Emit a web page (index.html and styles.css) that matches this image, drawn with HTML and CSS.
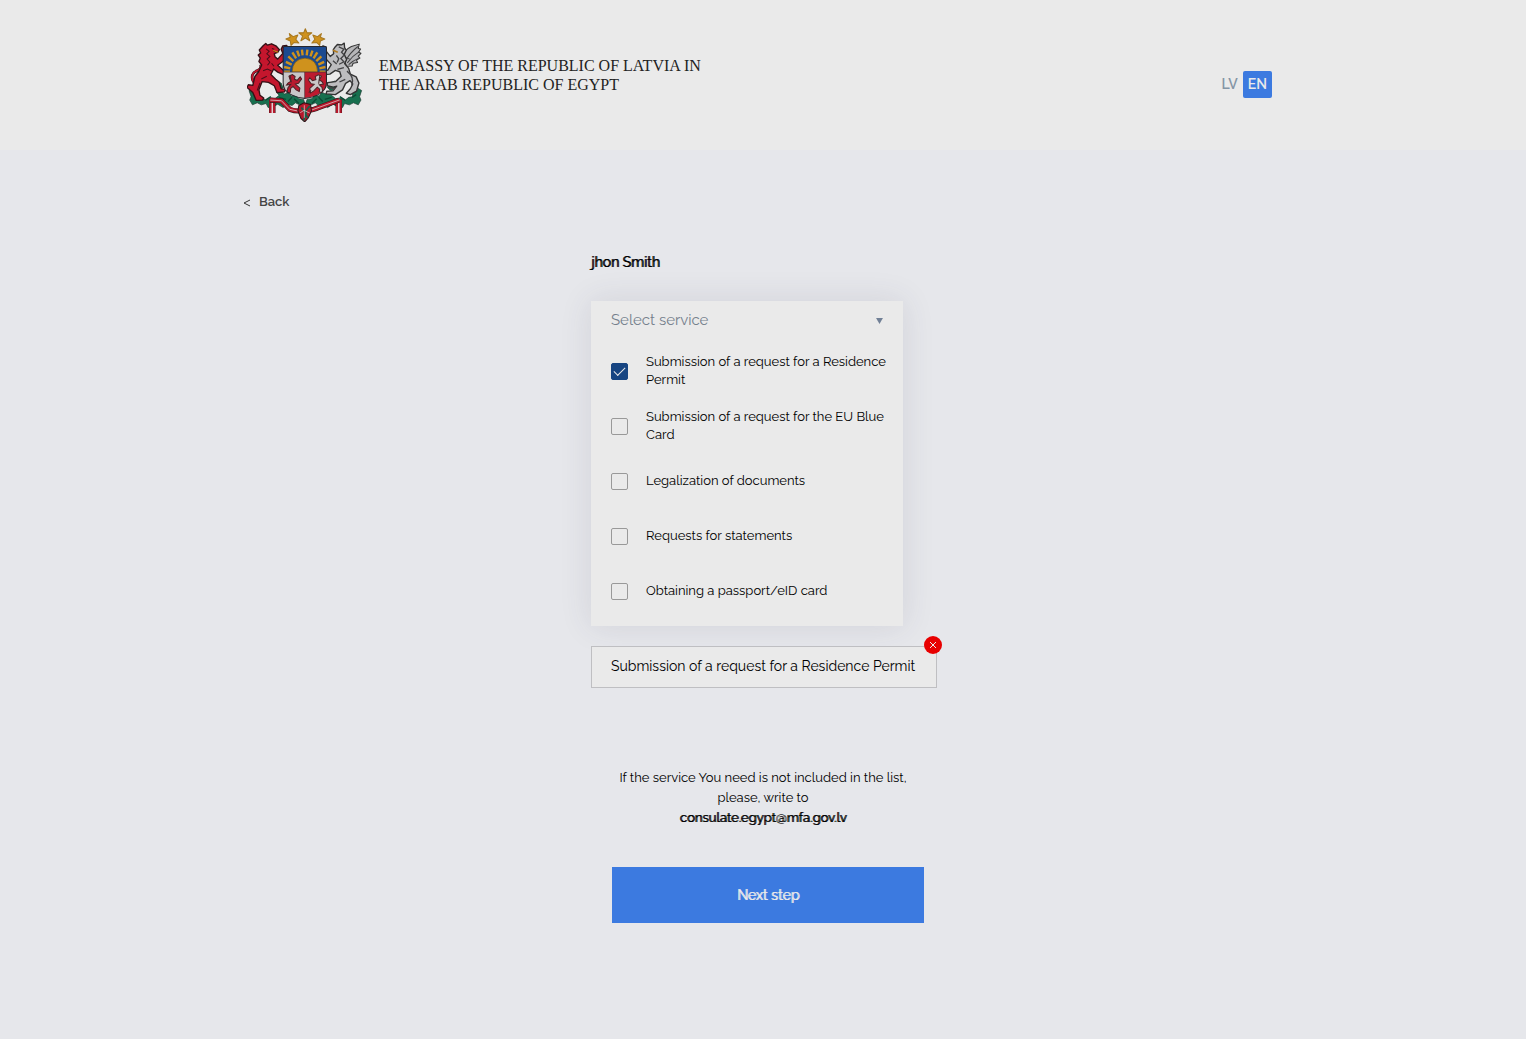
FILE: index.html
```html
<!DOCTYPE html>
<html lang="en">
<head>
<meta charset="utf-8">
<meta name="viewport" content="width=device-width, initial-scale=1">
<title>Select service</title>
<link rel="stylesheet" href="styles.css">
</head>
<body>
<header class="site-header">
  <div class="container header-row">
    <a class="brand" href="#">
      <svg class="arms" viewBox="22 25 340 275" role="img" aria-label="Coat of arms of Latvia">
        <!-- oak branches -->
        <g fill="#17704f" stroke="#1c3a30" stroke-width="2">
          <path d="M28 208l10-6 6 10 12 2-2 12 12 2 10 8 14-6 14 2 12-10-8-10 14-2 10 8 14-4 6 10 14-2 8 10 14 2 4 14-16 2-12-6-10 8-14-4-12 10-16-10-14 8-14 2-6-12-14 4-12-6-14 6-8-14 4-10z"/>
          <path d="M358 208l-10-6-6 10-12 2 2 12-12 2-10 8-14-6-14 2-12-10 8-10-14-2-10 8-14-4-6 10-14-2-8 10-14 2-4 14 16 2 12-6 10 8 14-4 12 10 16-10 14 8 14 2 6-12 14 4 12-6 14 6 8-14-4-10z"/>
          <path d="M106 180l16 6 6 14-12 10-12-14zM280 180l-16 6-6 14 12 10 12-14z"/>
        </g>
        <path d="M46 220l12 8M76 236l16-10M116 228l20 6M142 240l12-12M160 232l14 14M342 220l-12 8M310 236l-16-10M270 228l-20 6M244 240l-12-12M226 232l-14 14" fill="none" stroke="#0b4a35" stroke-width="4"/>
        <!-- ribbon -->
        <g fill="none" stroke-linecap="butt">
          <path d="M96 274V234M291 274V234" stroke="#2a1518" stroke-width="19"/>
          <path d="M96 274V234M291 274V234" stroke="#b4182b" stroke-width="17"/>
          <path d="M96 274V234M291 274V234" stroke="#e6e2e2" stroke-width="4"/>
          <path d="M90 236l33 2 24 25q22 8 44 3 24 1 43-9l58-21" stroke="#2a1518" stroke-width="15"/>
          <path d="M90 236l33 2 24 25q22 8 44 3 24 1 43-9l58-21" stroke="#b4182b" stroke-width="12"/>
          <path d="M90 236l33 2 24 25q22 8 44 3 24 1 43-9l58-21" stroke="#e6e2e2" stroke-width="2"/>
        </g>
        <path d="M174 252l15-8 19 5 3 18-9 21-11 12-11-10-9-23z" fill="#b4182b" stroke="#2a1518" stroke-width="3"/>
        <path d="M181 258l14 15-7 23M206 253l-15 18 9 18" fill="none" stroke="#17604a" stroke-width="5"/>
        <path d="M190 251v37M178 273l11-7 17 8" fill="none" stroke="#ded8d8" stroke-width="2"/>
        <!-- red lion -->
        <path d="M55 194q-22-12-17-32 3-9 16-13 11-4 8-17" fill="none" stroke="#351016" stroke-width="8"/>
        <path d="M55 194q-22-12-17-32 3-9 16-13 11-4 8-17" fill="none" stroke="#c4162d" stroke-width="5"/>
        <path d="M70 76l7-6 5 5 12-4 14 7 9 10-5 8-10 4 2 9 8 7 15-17-5-12 5-10 11-1 6 9-7 15-9 22-16 12 17 15 10 1 4 10-11 3-20-9-12-9-8 16 14 14 10 8 6 20 13 1-3 8-22 2-8-20-17-10-19-2-9 24 3 16 11 8-3 6-19 1-10-23-17-15 4-8 13 2 6-26 11-14 9-20-8-10 4-10-6-9 7-6-4-9z" fill="#c4162d" stroke="#351016" stroke-width="4" stroke-linejoin="round"/>
        <path d="M78 86l9 7-7 7 9 8-8 8 8 9-7 9M95 85l7 2M100 93l9 2M69 150l13-5 12 6M64 174l16-8M94 128l7 9M60 186l-8 22" fill="none" stroke="#4b0d18" stroke-width="3"/>
        <path d="M99 91l14 5" stroke="#c98a14" stroke-width="3"/>
        <!-- silver griffin -->
        <path d="M303 110q2-20 25-31l23-7-3 13 7 1-6 10 7 3-8 8 5 6-10 6 3 7-13 2-3 8-16 1z" fill="#b6b6b8" stroke="#333" stroke-width="3" stroke-linejoin="round"/>
        <path d="M311 121q13-24 36-42M316 127q14-20 35-33M320 132q13-12 30-19M304 108l19 8" fill="none" stroke="#424244" stroke-width="3"/>
        <path d="M279 82l8-9 13 1 7-5 1 13 5 8-6 12 7 15-6 12 12 14 5 17 17 8 8 18-7 24-18 10-12-4 12-13 7-14-8-10-13 8-9 19-21 14-27-2 2-8 18-1 11-14-10 3-18-4 1-9 23-3 17-16-4-13-13-4-16 11-17 1-3-9 14-4 10-16-14-15-11-18-6-15 7-7 8 4 2 13 11 14 10-8-1-12z" fill="#bdbdbf" stroke="#333" stroke-width="4" stroke-linejoin="round"/>
        <path d="M291 80l15 7-7 9 8 8-10 10 9 10-14 7M284 105l7 10-5 11M274 121l11 9M287 146l19-5M293 183l17-8M315 151q23 17 14 42M263 200l17 3" fill="none" stroke="#434345" stroke-width="4"/>
        <path d="M274 90l14 6" stroke="#b47d20" stroke-width="5"/>
        <!-- shield -->
        <path d="M128 79h127v75H128z" fill="#1b4a90"/>
        <g fill="none" stroke="#cf921d" stroke-width="7">
          <path d="M148 153h-17M149 143l-18-4M153 132l-17-8M158 122l-15-14M166 114l-11-18M175 108l-6-17M185 105l-2-17M235 153h17M234 143l18-4M231 132l17-8M225 122l15-14M217 114l11-18M208 108l6-17M197 105l2-17"/>
        </g>
        <path d="M154 154q1-38 38-41 36 3 37 41z" fill="#cf921d" stroke="#6c5520" stroke-width="2"/>
        <path d="M128 154h63v76q-40-4-58-25-5-8-5-20z" fill="#c9c6c8"/>
        <path d="M191 154h64v31q0 12-6 20-18 21-58 25z" fill="#bd1a2f"/>
        <path d="M145 166l10-5 8 6-2 8 8 3 9-10 4 6-9 13-9 2 13 12-2 10-9-5-9-10-7 6-1 11-10 1 3-14 8-10-12 2 4-6 8-5z" fill="#b91a2f" stroke="#4a2025" stroke-width="3"/>
        <path d="M240 166l-9-4-9 5 2 9-10 3-8-8-4 6 8 11 9 2-13 12 2 13 9-5 11-12 7 6-1 8 10 1-2-14-8-8 12-2-4-7-8-5z" fill="#cac7c8" stroke="#4b2227" stroke-width="3"/>
        <path d="M210 207l-7 7M148 162l4 22M235 166l-3 22" fill="none" stroke="#48282c" stroke-width="3"/>
        <path d="M133 79h118q4 0 4 5v101q0 12-6 20-18 23-58 26-40-4-58-26-5-8-5-20V84q0-5 5-5z" fill="none" stroke="#26262b" stroke-width="3"/>
        <path d="M128 154h127M191 154v76" stroke="#47333a" stroke-width="2"/>
        <!-- stars -->
        <g fill="#cf921d" stroke="#a8781f" stroke-width="3" stroke-linejoin="round">
          <path d="M193 27l5 12h14l-11 9 5 14-13-8-13 8 5-14-11-9h14z"/>
          <path d="M146 41l11 9 14-5-6 13 9 11-14-2-9 9-2-13-13-6 13-5z"/>
          <path d="M240 41l-11 9-14-5 6 13-9 11 14-2 9 9 2-13 13-6-13-5z"/>
        </g>
      </svg>
      <span class="brand-name">EMBASSY OF THE REPUBLIC OF LATVIA IN<br>THE ARAB REPUBLIC OF EGYPT</span>
    </a>
    <nav class="languages" aria-label="Language">
      <a class="language" href="#" lang="lv">LV</a>
      <a class="language active" href="#" aria-current="true">EN</a>
    </nav>
  </div>
</header>

<main class="container">
  <a class="back" href="#"><svg class="back-icon" viewBox="0 0 8 10" aria-hidden="true"><path d="M7 1L1 4L7 7"/></svg>Back</a>

  <form class="booking">
    <h1 class="person">jhon Smith</h1>

    <div class="dropdown">
      <button class="dropdown-toggle" type="button" aria-expanded="true" aria-controls="services">
        Select service
        <svg class="caret" viewBox="0 0 8 7" aria-hidden="true"><path d="M0 0h8L4 7z"/></svg>
      </button>
      <div class="services" id="services">
        <label class="service"><input class="tick" type="checkbox" checked><span>Submission of a request for a Residence Permit</span></label>
        <label class="service"><input class="tick" type="checkbox"><span>Submission of a request for the EU Blue Card</span></label>
        <label class="service"><input class="tick" type="checkbox"><span>Legalization of documents</span></label>
        <label class="service"><input class="tick" type="checkbox"><span>Requests for statements</span></label>
        <label class="service"><input class="tick" type="checkbox"><span>Obtaining a passport/eID card</span></label>
      </div>
    </div>

    <div class="chosen">
      <span>Submission of a request for a Residence Permit</span>
      <button class="remove" type="button" aria-label="Remove service"><svg viewBox="0 0 18 18" aria-hidden="true"><path d="M6 6l6 6M12 6l-6 6"/></svg></button>
    </div>

    <p class="note">If the service You need is not included in the list, please, write to<br><a class="email" href="mailto:consulate.egypt@mfa.gov.lv">consulate.egypt@mfa.gov.lv</a></p>

    <button class="next" type="submit">Next step</button>
  </form>
</main>
</body>
</html>
```
FILE: styles.css
```css
* {
  box-sizing: border-box;
}

body {
  margin: 0;
  min-height: 100vh;
  background: #e6e7eb;
  color: #000;
  font: 13px/18px Raleway, "Open Sans", sans-serif;
}

a {
  color: inherit;
  text-decoration: none;
}

button {
  border: 0;
  font: inherit;
  cursor: pointer;
}

.container {
  max-width: 1040px;
  margin: 0 auto;
}

.site-header {
  background: #eaeaea;
}

.header-row {
  display: flex;
  justify-content: space-between;
  align-items: center;
  min-height: 150px;
  padding: 0 11px 0 4px;
}

.brand {
  display: flex;
  align-items: center;
  gap: 16px;
}

.arms {
  width: 116px;
  height: 94px;
}

.brand-name {
  color: #222;
  font: 16px/19px "Liberation Serif", serif;
}

.languages {
  display: flex;
  padding-top: 19px;
}

.language {
  padding: 0 5px;
  border-radius: 2px;
  color: #8495a5;
  font-size: 14px;
  font-weight: 600;
  line-height: 27px;
}

.active {
  background: #3c7ae0;
  color: #eaeaea;
}

.back {
  display: inline-flex;
  align-items: center;
  gap: 8px;
  margin-top: 43px;
  color: #444;
  font-weight: 600;
}

.back-icon {
  width: 8px;
  height: 10px;
  margin-top: 3px;
  fill: none;
  stroke: #333;
}

.booking {
  width: 344px;
  max-width: 100%;
  margin: 38px auto 0;
  padding-bottom: 60px;
}

.person,
.email,
.next {
  font-weight: 400;
  text-shadow: 1px 0 currentColor;
}

.person {
  margin: 0 0 29px;
  font-size: 14px;
  line-height: 20px;
}

.dropdown {
  max-width: 312px;
  padding-bottom: 7px;
  background: #eaeaea;
  box-shadow: 0 0 30px rgba(60, 60, 90, 0.12);
}

.dropdown-toggle {
  display: flex;
  justify-content: space-between;
  align-items: center;
  width: 100%;
  margin-bottom: 5px;
  padding: 0 20px;
  background: none;
  color: #75808c;
  font-size: 15px;
  line-height: 38px;
}

.caret {
  width: 7px;
  height: 6px;
  margin-top: 2px;
  fill: #718096;
}

.service {
  display: flex;
  align-items: center;
  gap: 18px;
  min-height: 55px;
  padding: 0 12px 0 20px;
}

.tick {
  flex: none;
  appearance: none;
  width: 17px;
  height: 17px;
  margin: 0;
  border: 1px solid #999;
  border-radius: 2px;
}

.tick:checked {
  display: grid;
  place-items: center;
  border-color: #174582;
  background: #174582;
}

.tick:checked::before {
  content: "";
  width: 10px;
  height: 5px;
  margin-bottom: 3px;
  border: solid #eaeaea;
  border-width: 0 0 1px 1px;
  rotate: -45deg;
}

.chosen {
  position: relative;
  width: max-content;
  margin-top: 20px;
  padding: 0 21px 2px 19px;
  border: 1px solid #bfbfc2;
  background: #eaeaea;
  font-size: 14px;
  line-height: 38px;
}

.remove {
  position: absolute;
  top: -11px;
  right: -6px;
  width: 18px;
  height: 18px;
  padding: 0;
  border-radius: 50%;
  background: #e80000;
}

.remove svg {
  display: block;
  fill: none;
  stroke: #eaeaea;
}

.note {
  margin: 80px 20px 39px;
  line-height: 20px;
  text-align: center;
}

.next {
  display: block;
  width: 312px;
  max-width: 100%;
  margin-left: 21px;
  padding: 0;
  background: #3c7ae0;
  color: #eaeaea;
  font-size: 14px;
  line-height: 56px;
}
```
